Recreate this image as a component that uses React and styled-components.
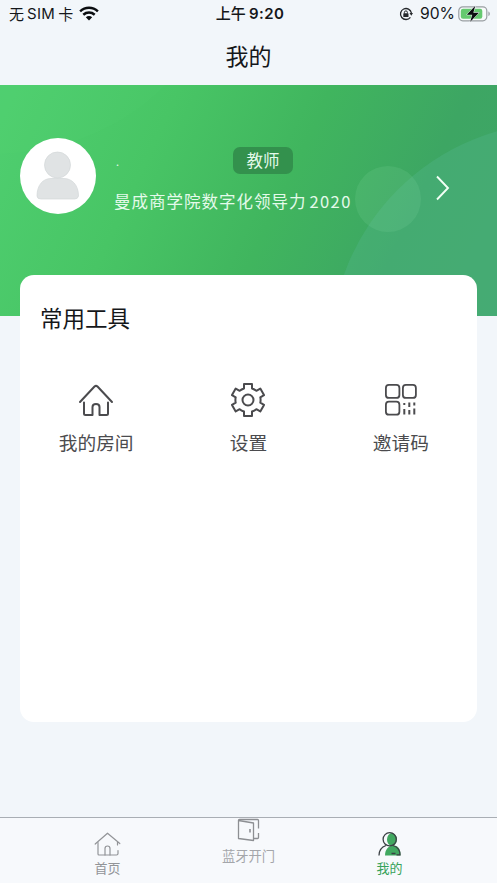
import React from 'react';
import styled, { createGlobalStyle } from 'styled-components';

const App = () => (
  <Screen>
    <GlobalStyle />
    <StatusBar>
      <Carrier>
        <span>无</span>
        <Latin>SIM</Latin>
        <span>卡</span>
        <WifiIcon />
      </Carrier>
      <Clock>上午 <b>9:20</b></Clock>
      <Power>
        <LockIcon />
        <Percent>90%</Percent>
        <BatteryIcon />
      </Power>
    </StatusBar>
    <Title>我的</Title>

    <Hero>
      <HeroArt />
      <Profile>
        <Avatar><AvatarIcon /></Avatar>
        <Info>
          <NameRow>
            <Name>.</Name>
            <Role>教师</Role>
          </NameRow>
          <School>曼成商学院数字化领导力<Year>2020</Year></School>
        </Info>
        <Chevron />
      </Profile>
    </Hero>

    <Card>
      <CardTitle>常用工具</CardTitle>
      <Tools>
        <Tool><RoomIcon /><span>我的房间</span></Tool>
        <Tool><GearIcon /><span>设置</span></Tool>
        <Tool><CodeIcon /><span>邀请码</span></Tool>
      </Tools>
    </Card>

    <TabBar>
      <Tab><HomeIcon /><span>首页</span></Tab>
      <Tab $raised><DoorIcon /><span>蓝牙开门</span></Tab>
      <Tab $active><MineIcon /><span>我的</span></Tab>
    </TabBar>
  </Screen>
);

export default App;

const WifiIcon = () => (
  <svg width="20" height="15" viewBox="0 0 20 15">
    <g fill="none" stroke="#0b0d10" strokeWidth="2.5">
      <path d="M1.1 5.3C6.2.6 13.8.6 18.9 5.3" />
      <path d="M4.3 8.7C7.6 5.8 12.4 5.8 15.7 8.7" />
    </g>
    <path fill="#0b0d10" d="M6.8 11.2C8.7 9.7 11.3 9.7 13.2 11.2L10 14.5Z" />
  </svg>
);

const LockIcon = () => (
  <svg width="14" height="14" viewBox="0 0 14 14">
    <path d="M11.4 10.3A5.5 5.5 0 1 1 12.4 6" fill="none" stroke="#25282c" strokeWidth="1.3" />
    <path d="M10.5 6h3.5l-1.7 2.8z" fill="#25282c" />
    <rect x="4.3" y="6.3" width="5.2" height="3.8" rx=".6" fill="#25282c" />
    <path d="M5.4 6.5V5.4a1.5 1.5 0 0 1 3 0v1.1" fill="none" stroke="#25282c" strokeWidth="1" />
  </svg>
);

const BatteryIcon = () => (
  <svg width="33" height="18" viewBox="0 0 33 18">
    <rect x=".8" y="1.8" width="28" height="14" rx="4" fill="#f7fafa" stroke="#9a9fa3" strokeWidth="1.2" />
    <rect x="2.8" y="3.8" width="21.500" height="10" rx="2.2" fill="#65c96f" />
    <path d="M30.4 6.5c1.9.6 1.9 4 0 4.6z" fill="#9a9fa3" />
    <path d="M17.3.8L8.8 9.8h5.500L12.1 17l8.8-9.3h-5.600z" fill="#0b0d10" stroke="#f4f8fa" strokeWidth="1" paintOrder="stroke" />
  </svg>
);

const AvatarIcon = () => (
  <svg width="44" height="50" viewBox="0 0 44 50">
    <g fill="#e0e3e4" stroke="#d3d7d8" strokeWidth=".7">
      <circle cx="21.500" cy="15" r="13" />
      <path d="M1 46C1 35 7 28.500 15 28.500H28C36 28.500 42.500 35 42.500 46Q42 49 38.500 49H5Q1 49 1 46Z" />
    </g>
  </svg>
);

const Chevron = () => (
  <svg width="16" height="26" viewBox="0 0 16 26">
    <path d="M2 1.5L13 13 2 24.5" fill="none" stroke="#f2fff5" strokeWidth="1.9" />
  </svg>
);

const RoomIcon = () => (
  <svg width="36" height="36" viewBox="0 0 36 36">
    <g fill="none" stroke="#4b4b4e" strokeWidth="2" strokeLinecap="round" strokeLinejoin="round">
      <path d="M2 20L16.5 4.500Q18 3.200 19.500 4.500L34 20" />
      <path d="M6 20.500V31.500Q6 33 7.500 33H14.500V25Q14.500 22 18 22T21.500 25V33H28.500Q30 33 30 31.500V20.500" />
    </g>
  </svg>
);

const GearIcon = () => (
  <svg width="36" height="36" viewBox="0 0 36 36">
    <g fill="none" stroke="#4b4b4e" strokeWidth="2" strokeLinejoin="round">
      <path d="M14 2H22V6.5Q24.500 7.300 26.300 8.800L30.300 6.600L34 13.100L30.300 15.300Q30.900 18 30.300 20.700L34 22.900L30.300 29.400L26.300 27.200Q24.500 28.700 22 29.500V34H14V29.500Q11.500 28.700 9.700 27.200L5.700 29.400L2 22.900L5.700 20.700Q5.100 18 5.700 15.300L2 13.100L5.700 6.600L9.700 8.800Q11.500 7.300 14 6.500Z" />
      <circle cx="18" cy="18" r="5.5" />
    </g>
  </svg>
);

const CodeIcon = () => (
  <svg width="36" height="36" viewBox="0 0 36 36">
    <g fill="none" stroke="#4b4b4e" strokeWidth="1.8">
      <rect x="2.900" y="2.900" width="13.500" height="13" rx="3" />
      <rect x="19.900" y="2.900" width="13" height="13" rx="3" />
      <rect x="2.900" y="19.700" width="13.500" height="13" rx="3" />
    </g>
    <path d="M21.300 21v2M21.300 27v5.500M26.300 20.500v4.500M26.300 28v4.500M31.300 20.500v3M31.300 26.500v6" stroke="#4b4b4e" strokeWidth="2" />
  </svg>
);

const HomeIcon = () => (
  <svg width="28" height="28" viewBox="0 0 28 28">
    <g fill="none" stroke="#929498" strokeWidth="1.2" strokeLinecap="round" strokeLinejoin="round">
      <path d="M1.200 14L13.500 3.200 25.800 13.500M23.500 12v3" />
      <path d="M4 12.500V24Q4 25 5 25H22.500Q24 25 24 23.500V20.500" />
      <path d="M11 25V18.500Q11 16 13.500 16T16 18.500V25" />
    </g>
  </svg>
);

const DoorIcon = () => (
  <svg width="28" height="26" viewBox="0 2 28 26">
    <g fill="none" stroke="#8d8f93" strokeWidth="1.3" strokeLinejoin="round">
      <path d="M3.500 4.500L18.500 7V24.500L3.500 22.500Z" />
      <path d="M3.500 4.500Q3.500 3.500 4.500 3.500H22.500Q23.500 3.500 23.500 4.500V12.500M23.500 17V21.500Q23.500 22.500 22.500 22.500H19" />
      <path d="M15 13v3.500" strokeWidth="1.6" />
    </g>
  </svg>
);

const MineIcon = () => (
  <svg width="28" height="28" viewBox="0 0 28 28">
    <ellipse cx="16" cy="9.500" rx="5" ry="6.500" fill="#41a860" />
    <path d="M9 25.500C9 20 12 15.500 17.500 15.500S24.500 20 24.500 25.500Z" fill="#41a860" />
    <g fill="none" stroke="#3b4044" strokeWidth="1.3">
      <circle cx="13.700" cy="9.300" r="6.600" />
      <path d="M3 25.500C3 20.500 5.500 17 10 15.500M17 15.500C21.500 17 24 20.500 24 24.800H20.500M15.500 23.500h4" />
    </g>
  </svg>
);

const HeroArt = () => (
  <Art viewBox="0 0 497 231">
    <circle cx="560" cy="267" r="229.5" fill="#50b586" fillOpacity=".4" />
    <circle cx="388" cy="114" r="33" fill="#8be0a8" fillOpacity=".15" />
    <path d="M0 0H165Q100 65 0 69Z" fill="#5ad777" fillOpacity=".1" />
  </Art>
);

const GlobalStyle = createGlobalStyle`
  * {
    box-sizing: border-box;
  }
  body {
    margin: 0;
    background: #f2f6fa;
    font-family: "Noto Sans CJK SC", sans-serif;
  }
  svg {
    display: block;
    flex-shrink: 0;
  }
`;

const Screen = styled.div`
  width: 497px;
  height: 883px;
  display: flex;
  flex-direction: column;
  overflow: hidden;
  background: #f2f6fa;
  color: #15171a;
  white-space: nowrap;
`;

const StatusBar = styled.header`
  height: 27px;
  display: grid;
  grid-template-columns: 1fr auto 1fr;
  align-items: center;
  padding: 0 6px 0 9px;
  font-size: 15px;
  line-height: 26px;
`;

const Carrier = styled.div`
  display: flex;
  align-items: center;
  svg {
    margin-left: 6px;
  }
`;

const Latin = styled.span`
  margin: 0 3px;
  font-family: Inter, sans-serif;
  letter-spacing: 0.3px;
`;

const Clock = styled.div`
  font-weight: 500;
  b {
    font-family: Inter, sans-serif;
    font-weight: 600;
    letter-spacing: 0.4px;
  }
`;

const Power = styled.div`
  display: flex;
  align-items: center;
  justify-content: flex-end;
`;

const Percent = styled.span`
  margin: 0 3px 0 7px;
  font-family: Inter, sans-serif;
  font-size: 15.7px;
`;

const Title = styled.h1`
  height: 58px;
  margin: 0;
  font-size: 23px;
  font-weight: 400;
  line-height: 56px;
  text-align: center;
`;

const Hero = styled.section`
  position: relative;
  flex-shrink: 0;
  height: 231px;
  padding: 53px 46px 0 20px;
  background: linear-gradient(115deg, #4fcf70 0%, #48c565 30%, #40b55e 55%, #3da663 78%, #3fa568 100%);
`;

const Art = styled.svg`
  position: absolute;
  inset: 0;
  width: 100%;
  height: 100%;
`;

const Profile = styled.div`
  position: relative;
  display: flex;
  align-items: flex-start;
  > svg {
    margin: 37px 0 0 auto;
  }
`;

const Avatar = styled.div`
  width: 76px;
  height: 76px;
  display: flex;
  justify-content: center;
  padding-top: 12px;
  border-radius: 50%;
  background: #fff;
`;

const Info = styled.div`
  padding: 9px 0 0 18px;
  color: #e4faea;
`;

const NameRow = styled.div`
  display: flex;
  height: 27px;
`;

const Name = styled.span`
  width: 119px;
  padding-left: 2px;
  font-size: 11px;
  line-height: 28px;
`;

const Role = styled.span`
  width: 60px;
  height: 27px;
  border-radius: 7px;
  background: #33914d;
  font-size: 16.5px;
  line-height: 26px;
  text-align: center;
`;

const School = styled.div`
  margin-top: 13px;
  font-size: 16.5px;
  line-height: 28px;
  letter-spacing: 1px;
`;

const Year = styled.span`
  margin-left: 3px;
  letter-spacing: 1.4px;
`;

const Card = styled.main`
  position: relative;
  flex-shrink: 0;
  width: 457px;
  height: 447px;
  margin: -41px 20px 0;
  padding: 26px 0 0;
  border-radius: 14px;
  background: #fff;
`;

const CardTitle = styled.h2`
  margin: 0 20px;
  font-size: 22.5px;
  font-weight: 400;
  line-height: 32px;
`;

const Tools = styled.div`
  display: grid;
  grid-template-columns: repeat(3, 1fr);
  margin-top: 49px;
`;

const Tool = styled.div`
  display: flex;
  flex-direction: column;
  align-items: center;
  gap: 10px;
  color: #4b4b4e;
  font-size: 18.7px;
  line-height: 28px;
`;

const TabBar = styled.nav`
  display: flex;
  justify-content: center;
  flex-shrink: 0;
  height: 66px;
  margin-top: auto;
  border-top: 1.5px solid #a9aeb4;
  background: #f7f9fc;
`;

const Tab = styled.div`
  width: 141px;
  display: flex;
  flex-direction: column;
  align-items: center;
  padding-top: ${({ $raised }) => ($raised ? '0' : '12px')};
  color: ${({ $active, $raised }) => ($active ? '#36a25a' : $raised ? '#a4a6aa' : '#929498')};
  font-size: ${({ $raised }) => ($raised ? '13.3px' : '13px')};
  line-height: ${({ $raised }) => ($raised ? '24px' : '20px')};
`;
